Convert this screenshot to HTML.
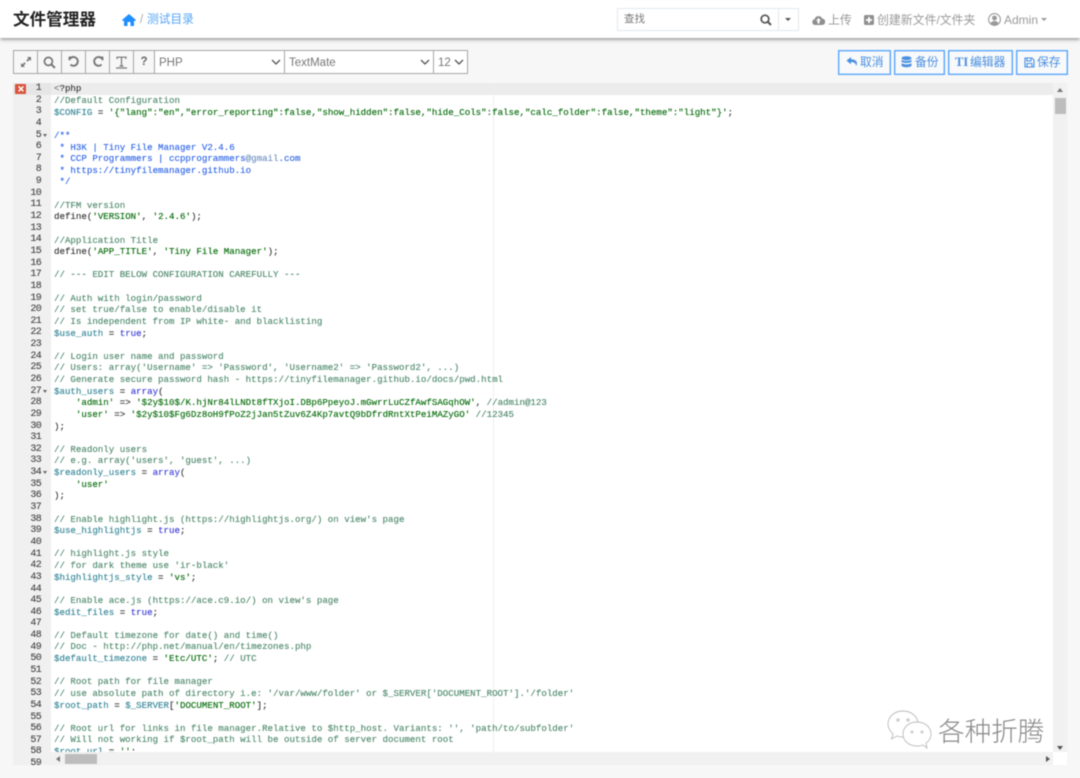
<!DOCTYPE html>
<html lang="zh">
<head>
<meta charset="utf-8">
<title>文件管理器</title>
<style>
html,body{margin:0;padding:0;width:1080px;height:778px;overflow:hidden;background:#f7f7f7;font-family:"Liberation Sans","Noto Sans CJK SC",sans-serif}
#wrap{position:absolute;left:0;top:0;width:1080px;height:778px;overflow:hidden;filter:blur(.4px)}
.a{position:absolute}
#hdr{left:0;top:0;width:1080px;height:38px;background:#fff;box-shadow:0 1px 4px rgba(0,0,0,.5)}
.nav{color:#9a9a9a;font-size:11.9px;line-height:14px;white-space:nowrap}
.tb{top:50px;height:24px;box-sizing:border-box;border:1px solid #a6a6a6;background:#f7f7f7;display:flex;align-items:center;justify-content:center}
.tb+.tb{border-left:0}
.sel{top:50px;height:24px;box-sizing:border-box;border:1px solid #a6a6a6;border-left:0;background:#fff;color:#777;font-size:11.5px;line-height:24px;padding-left:4px}
.sel svg{position:absolute;right:3px;top:8px}
.btn{top:50px;height:25px;box-sizing:border-box;border:1px solid #5aa8ff;background:#f8f9fa;color:#4a90e2;font-size:11.8px;line-height:23px;white-space:nowrap;box-shadow:inset 0 0 0 .4px #5aa8ff}
.btn svg{position:absolute;top:5px}
.btn span{position:absolute;top:0}
#ed{left:13px;top:83px;width:1054px;height:682px;background:#fff;overflow:hidden}
#gut{left:0;top:0;width:38px;height:682px;background:#f0f0f0;overflow:hidden}
.n{position:absolute;right:10px;width:24px;text-align:right;height:11.64px;font:10px/11.64px "Liberation Mono",monospace;letter-spacing:-.7px;color:#444;-webkit-text-stroke:.1px #444}
#act{left:0;top:0;width:1040px;height:11.64px;background:#ececec}
#gact{left:0;top:0;width:38px;height:11.64px;background:#e6e6e6}
#pm{left:480px;top:0;width:1px;height:682px;background:#eee}
#code{left:41px;top:0;width:999px;height:669px;overflow:hidden;font:9.13px/11.64px "Liberation Mono",monospace;color:#333;-webkit-text-stroke:.12px}
#code div{height:11.64px;white-space:pre;position:relative;top:.4px}
.c{color:#4c886b}.s{color:#036a07}.v{color:#318495}.k{color:#3a3ad8}.f{color:#3c4c72}.d{color:#2a62e8}.b{color:#0b2a9a}
.fold{position:absolute;left:30px;width:0;height:0;border-left:2.5px solid transparent;border-right:2.5px solid transparent;border-top:3px solid #666}
</style>
</head>
<body>
<div id="wrap">
<div id="hdr" class="a"></div>
<div class="a" style="left:13px;top:9px;font-size:16.6px;line-height:22px;font-weight:700;color:#222;white-space:nowrap">文件管理器</div>
<svg class="a" style="left:122px;top:14px" width="14" height="12" viewBox="0 0 14 12"><path d="M7 0 L14 6 L12.8 7.2 L12 6.5 V12 H8.5 V8 H5.5 V12 H2 V6.5 L1.2 7.2 L0 6 Z" fill="#1f8fff"/></svg>
<div class="a" style="left:140px;top:13px;font-size:11.5px;line-height:14px;color:#aaa">/</div>
<div class="a" style="left:147px;top:13px;font-size:11.7px;line-height:14px;color:#55a5f7;white-space:nowrap">测试目录</div>

<div class="a" style="left:617px;top:8px;width:182px;height:23px;box-sizing:border-box;border:1px solid #e2e8ed;background:#fff"></div>
<div class="a" style="left:778px;top:8px;width:1px;height:23px;background:#e2e8ed"></div>
<div class="a" style="left:624px;top:13px;font-size:10.5px;line-height:13px;color:#777">查找</div>
<svg class="a" style="left:760px;top:14px" width="12" height="12" viewBox="0 0 12 12"><circle cx="5" cy="5" r="3.8" fill="none" stroke="#555" stroke-width="1.7"/><path d="M8 8 L11 11" stroke="#555" stroke-width="2"/></svg>
<div class="a" style="left:785px;top:18px;width:0;height:0;border-left:3px solid transparent;border-right:3px solid transparent;border-top:3px solid #555"></div>

<svg class="a" style="left:812px;top:15px" width="13" height="10" viewBox="0 0 13 10"><path d="M3 10 A3 3 0 0 1 2.6 4.1 A4 4 0 0 1 10.2 3.6 A3.2 3.2 0 0 1 10 10 Z" fill="#8f8f8f"/><path d="M6.5 3 L9 5.8 H7.5 V8.5 H5.5 V5.8 H4 Z" fill="#fff"/></svg>
<div class="a nav" style="left:828px;top:13px">上传</div>
<svg class="a" style="left:864px;top:15px" width="10" height="10" viewBox="0 0 10 10"><rect width="10" height="10" rx="1.6" fill="#8f8f8f"/><path d="M5 2 V8 M2 5 H8" stroke="#fff" stroke-width="1.8"/></svg>
<div class="a nav" style="left:877px;top:13px">创建新文件/文件夹</div>
<svg class="a" style="left:988px;top:13px" width="13" height="13" viewBox="0 0 13 13"><circle cx="6.5" cy="6.5" r="5.9" fill="none" stroke="#999" stroke-width="1.1"/><circle cx="6.5" cy="5" r="2.4" fill="#999"/><path d="M2.4 10.6 A4.4 4 0 0 1 10.6 10.6 A5.8 5.8 0 0 1 2.4 10.6 Z" fill="#999"/></svg>
<div class="a nav" style="left:1004px;top:13px;font-size:12px">Admin</div>
<div class="a" style="left:1041px;top:18px;width:0;height:0;border-left:3px solid transparent;border-right:3px solid transparent;border-top:3px solid #999"></div>

<!-- toolbar -->
<div class="a tb" style="left:13px;width:25px"><svg width="12" height="12" viewBox="0 0 12 12"><path d="M7 1 H11 V5 L9.6 3.6 L7.5 5.7 L6.3 4.5 L8.4 2.4 Z M5 11 H1 V7 L2.4 8.4 L4.5 6.3 L5.7 7.5 L3.6 9.6 Z" fill="#777"/></svg></div>
<div class="a tb" style="left:38px;width:24px"><svg width="13" height="13" viewBox="0 0 12 12"><circle cx="5" cy="5" r="3.7" fill="none" stroke="#777" stroke-width="1.6"/><path d="M7.8 7.8 L11 11" stroke="#777" stroke-width="1.9"/></svg></div>
<div class="a tb" style="left:62px;width:24px"><svg width="12" height="12" viewBox="0 0 12 12"><path d="M1 1.5 H4.2 M1.5 1 V4.2 M2 2.6 A4.4 4.4 0 1 1 2.4 8.6" fill="none" stroke="#777" stroke-width="1.9"/></svg></div>
<div class="a tb" style="left:86px;width:24px"><svg width="12" height="12" viewBox="0 0 12 12"><path d="M11 1.5 H7.8 M10.5 1 V4.2 M10 2.6 A4.4 4.4 0 1 0 9.6 8.6" fill="none" stroke="#777" stroke-width="1.9"/></svg></div>
<div class="a tb" style="left:110px;width:24px"><svg width="13" height="13" viewBox="0 0 13 13"><path d="M2 3 V1.2 H11 V3 M6.5 1.2 V10 M4.5 10 H8.5 M1 12 H12" fill="none" stroke="#777" stroke-width="1.2"/></svg></div>
<div class="a tb" style="left:134px;width:21px;color:#666;font-size:11.5px;font-weight:700">?</div>
<div class="a sel" style="left:155px;width:130px">PHP<svg width="10" height="7" viewBox="0 0 10 7"><path d="M1 1 L5 5 L9 1" fill="none" stroke="#555" stroke-width="1.3"/></svg></div>
<div class="a sel" style="left:285px;width:149px">TextMate<svg width="10" height="7" viewBox="0 0 10 7"><path d="M1 1 L5 5 L9 1" fill="none" stroke="#555" stroke-width="1.3"/></svg></div>
<div class="a sel" style="left:434px;width:34px">12<svg width="10" height="7" viewBox="0 0 10 7"><path d="M1 1 L5 5 L9 1" fill="none" stroke="#555" stroke-width="1.3"/></svg></div>

<div class="a btn" style="left:838px;width:53px"><svg style="left:7px" width="12" height="11" viewBox="0 0 12 11"><path d="M5 1 L0.5 4.6 L5 8.2 V6 C8 6 9.6 7 10.4 10 C12 6 10 3.2 5 3.2 Z" fill="#4a90e2"/></svg><span style="left:21px">取消</span></div>
<div class="a btn" style="left:894px;width:51px"><svg style="left:6px" width="11" height="12" viewBox="0 0 11 12"><ellipse cx="5.5" cy="2.2" rx="5" ry="2" fill="#4a90e2"/><path d="M.5 3.6 C2 5.4 9 5.4 10.5 3.6 V5.6 C9 7.4 2 7.4 .5 5.6 Z M.5 7 C2 8.8 9 8.8 10.5 7 V9.6 C9 11.8 2 11.8 .5 9.6 Z" fill="#4a90e2"/></svg><span style="left:20px">备份</span></div>
<div class="a btn" style="left:948px;width:65px"><span style="left:6px;font-family:'Liberation Serif',serif;font-weight:700;font-size:12.5px">TI</span><span style="left:21px">编辑器</span></div>
<div class="a btn" style="left:1016px;width:52px"><svg style="left:7px;top:6px" width="11" height="11" viewBox="0 0 11 11"><path d="M1 1 H8 L10 3 V10 H1 Z M3 1 V4 H7 V1 M3 10 V6.5 H8 V10" fill="none" stroke="#4a90e2" stroke-width="1.1"/></svg><span style="left:20px">保存</span></div>

<!-- editor -->
<div id="ed" class="a">
<div id="act" class="a"></div>
<div id="pm" class="a"></div>
<div id="gut" class="a"><div id="gact" class="a"></div><div id="nums"></div>
<div class="a" style="left:2px;top:.5px;width:11px;height:10.5px;background:#d8533c;border-radius:1px"></div>
<svg class="a" style="left:2.5px;top:1px" width="10" height="10" viewBox="0 0 10 10"><path d="M2.6 2.4 L7.4 7.4 M7.4 2.4 L2.6 7.4" stroke="#fff" stroke-width="1.5"/></svg>
<div class="fold" style="top:51px"></div>
<div class="fold" style="top:307px"></div>
<div class="fold" style="top:388px"></div>
</div>
<div id="code" class="a">
<div><span style="color:#777">&lt;</span><span style="color:#333">?php</span></div>
<div class="c">//Default Configuration</div>
<div><span class="v">$CONFIG</span> = <span class="s">'{"lang":"en","error_reporting":false,"show_hidden":false,"hide_Cols":false,"calc_folder":false,"theme":"light"}'</span>;</div>
<div></div>
<div class="d">/**</div>
<div class="d"> * H3K | Tiny File Manager V2.4.6</div>
<div class="d"> * CCP Programmers | ccpprogrammers<span style="color:#6f8fc0">@gmail</span>.com</div>
<div class="d"> * https://tinyfilemanager.github.io</div>
<div class="d"> */</div>
<div></div>
<div class="c">//TFM version</div>
<div>define(<span class="s">'VERSION'</span>, <span class="s">'2.4.6'</span>);</div>
<div></div>
<div class="c">//Application Title</div>
<div>define(<span class="s">'APP_TITLE'</span>, <span class="s">'Tiny File Manager'</span>);</div>
<div></div>
<div class="c">// --- EDIT BELOW CONFIGURATION CAREFULLY ---</div>
<div></div>
<div class="c">// Auth with login/password</div>
<div class="c">// set true/false to enable/disable it</div>
<div class="c">// Is independent from IP white- and blacklisting</div>
<div><span class="v">$use_auth</span> = <span class="k">true</span>;</div>
<div></div>
<div class="c">// Login user name and password</div>
<div class="c">// Users: array('Username' =&gt; 'Password', 'Username2' =&gt; 'Password2', ...)</div>
<div class="c">// Generate secure password hash - https://tinyfilemanager.github.io/docs/pwd.html</div>
<div><span class="v">$auth_users</span> = <span class="k">array</span>(</div>
<div>    <span class="s">'admin'</span> =&gt; <span class="s">'$2y$10$/K.hjNr84lLNDt8fTXjoI.DBp6PpeyoJ.mGwrrLuCZfAwfSAGqhOW'</span>, <span class="c">//admin@123</span></div>
<div>    <span class="s">'user'</span> =&gt; <span class="s">'$2y$10$Fg6Dz8oH9fPoZ2jJan5tZuv6Z4Kp7avtQ9bDfrdRntXtPeiMAZyGO'</span> <span class="c">//12345</span></div>
<div>);</div>
<div></div>
<div class="c">// Readonly users</div>
<div class="c">// e.g. array('users', 'guest', ...)</div>
<div><span class="v">$readonly_users</span> = <span class="k">array</span>(</div>
<div>    <span class="s">'user'</span></div>
<div>);</div>
<div></div>
<div class="c">// Enable highlight.js (https://highlightjs.org/) on view's page</div>
<div><span class="v">$use_highlightjs</span> = <span class="k">true</span>;</div>
<div></div>
<div class="c">// highlight.js style</div>
<div class="c">// for dark theme use 'ir-black'</div>
<div><span class="v">$highlightjs_style</span> = <span class="s">'vs'</span>;</div>
<div></div>
<div class="c">// Enable ace.js (https://ace.c9.io/) on view's page</div>
<div><span class="v">$edit_files</span> = <span class="k">true</span>;</div>
<div></div>
<div class="c">// Default timezone for date() and time()</div>
<div class="c">// Doc - http://php.net/manual/en/timezones.php</div>
<div><span class="v">$default_timezone</span> = <span class="s">'Etc/UTC'</span>; <span class="c">// UTC</span></div>
<div></div>
<div class="c">// Root path for file manager</div>
<div class="c">// use absolute path of directory i.e: '/var/www/folder' or $_SERVER['DOCUMENT_ROOT'].'/folder'</div>
<div><span class="v">$root_path</span> = <span class="v">$_SERVER</span>[<span class="s">'DOCUMENT_ROOT'</span>];</div>
<div></div>
<div class="c">// Root url for links in file manager.Relative to $http_host. Variants: '', 'path/to/subfolder'</div>
<div class="c">// Will not working if $root_path will be outside of server document root</div>
<div><span class="v">$root_url</span> = <span class="s">''</span>;</div>
</div>

<!-- v scrollbar -->
<div class="a" style="left:1040px;top:0;width:14px;height:669px;background:#f1f1f1"></div>
<div class="a" style="left:1042px;top:15px;width:11px;height:16px;background:#bdbdbd"></div>
<div class="a" style="left:1044px;top:5px;width:0;height:0;border-left:3.5px solid transparent;border-right:3.5px solid transparent;border-bottom:4px solid #777"></div>
<div class="a" style="left:1044px;top:663px;width:0;height:0;border-left:3.5px solid transparent;border-right:3.5px solid transparent;border-top:4px solid #555"></div>
<!-- h scrollbar -->
<div class="a" style="left:38px;top:669px;width:1002px;height:13px;background:#f1f1f1"></div>
<div class="a" style="left:52px;top:671px;width:32px;height:10px;background:#bdbdbd"></div>
<div class="a" style="left:43px;top:673px;width:0;height:0;border-top:3px solid transparent;border-bottom:3px solid transparent;border-right:4px solid #777"></div>
<div class="a" style="left:1033px;top:673px;width:0;height:0;border-top:3px solid transparent;border-bottom:3px solid transparent;border-left:4px solid #555"></div>
</div>

<!-- watermark -->
<svg class="a" style="left:886px;top:709px" width="48" height="42" viewBox="0 0 48 42"><path d="M17 2 C8 2 2 8 2 15 C2 19 4 22 7 25 L5.5 30 L11 27 C13 28 15 28 17 28 C27 28 32 22 32 15 C32 8 26 2 17 2 Z" fill="#fff" stroke="#bbb" stroke-width=".9"/><circle cx="12" cy="11" r="1.7" fill="#ccc"/><circle cx="22" cy="11" r="1.7" fill="#ccc"/><path d="M31 13 C22 13 17 19 17 25 C17 32 23 37 31 37 C33 37 35 37 37 36 L41 39 L40 34 C43 32 45 29 45 25 C45 19 40 13 31 13 Z" fill="#fff" stroke="#bbb" stroke-width=".9"/><circle cx="26" cy="23" r="1.5" fill="#ccc"/><circle cx="36" cy="23" r="1.5" fill="#ccc"/></svg>
<div class="a" style="left:938px;top:712px;font-family:'Noto Sans CJK SC',sans-serif;font-weight:300;font-size:26.6px;line-height:36px;color:#8a8a8a;white-space:nowrap">各种折腾</div>
</div>
<script>
var h='',i;for(i=1;i<=59;i++){h+='<div class="n" style="top:'+((i-1)*11.64).toFixed(2)+'px">'+i+'</div>';}
document.getElementById('nums').innerHTML=h;
</script>
</body>
</html>
